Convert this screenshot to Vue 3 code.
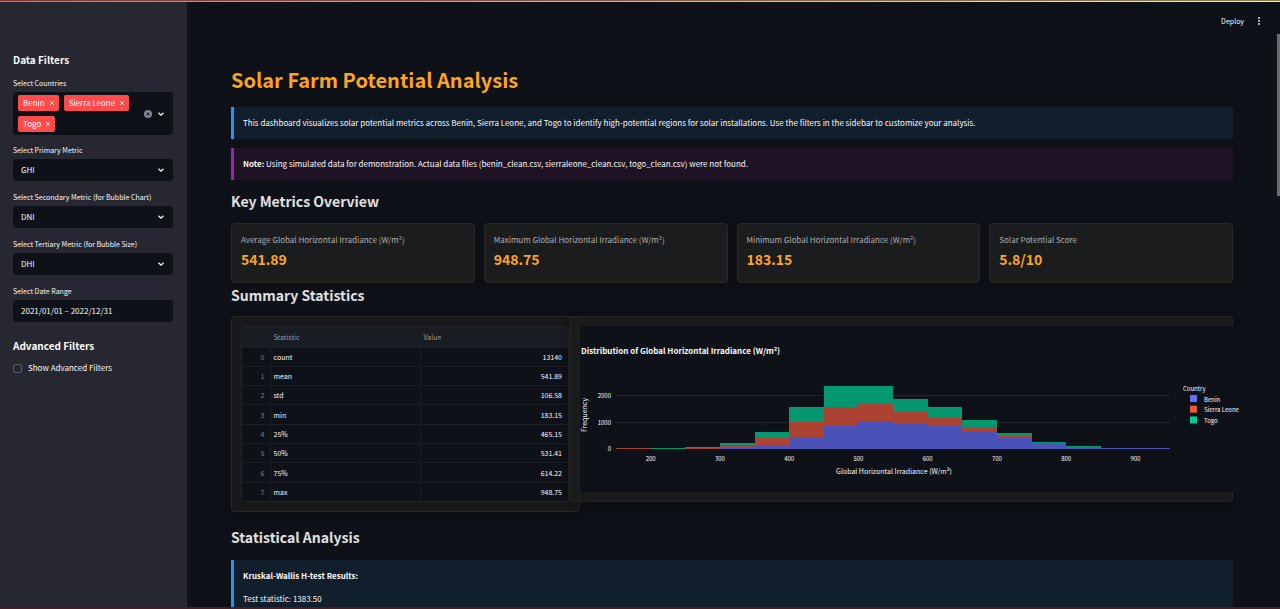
<script setup>
import { ref } from 'vue'

const countries = ref(['Benin', 'Sierra Leone', 'Togo'])
const selects = [
  { id: 'primary', label: 'Select Primary Metric', value: 'GHI' },
  { id: 'secondary', label: 'Select Secondary Metric (for Bubble Chart)', value: 'DNI' },
  { id: 'tertiary', label: 'Select Tertiary Metric (for Bubble Size)', value: 'DHI' },
]
const options = ['GHI', 'DNI', 'DHI']
const dateRange = ref('2021/01/01 – 2022/12/31')
const advanced = ref(false)

const metrics = [
  { label: 'Average Global Horizontal Irradiance (W/m²)', value: '541.89' },
  { label: 'Maximum Global Horizontal Irradiance (W/m²)', value: '948.75' },
  { label: 'Minimum Global Horizontal Irradiance (W/m²)', value: '183.15' },
  { label: 'Solar Potential Score', value: '5.8/10' },
]
const stats = [
  ['count', '13140'],
  ['mean', '541.89'],
  ['std', '106.58'],
  ['min', '183.15'],
  ['25%', '465.15'],
  ['50%', '531.41'],
  ['75%', '614.22'],
  ['max', '948.75'],
]

// Stacked counts per 50 W/m² bin: Benin, Sierra Leone, Togo
const bins = [
  [150, 0, 35, 0],
  [200, 0, 0, 38],
  [250, 10, 40, 40],
  [300, 30, 130, 50],
  [350, 100, 320, 210],
  [400, 400, 625, 580],
  [450, 900, 710, 800],
  [500, 1065, 630, 715],
  [550, 935, 485, 495],
  [600, 860, 305, 435],
  [650, 660, 180, 250],
  [700, 430, 65, 125],
  [750, 215, 25, 40],
  [800, 50, 25, 30],
  [850, 35, 0, 0],
  [900, 35, 0, 0],
]
const x = (v) => 36 + ((v - 150) * 554) / 800
const y = (v) => 123 - Math.round(v * 0.0263)
const bars = bins.flatMap(([start, ...counts]) => {
  let base = 0
  return counts.map((count, i) => {
    const top = y(base + count)
    const bar = { x: x(start), y: top, w: x(start + 50) - x(start), h: y(base) - top, cls: 'series-' + i }
    base += count
    return bar
  })
})
const xTicks = [200, 300, 400, 500, 600, 700, 800, 900]
const yTicks = [0, 1000, 2000]
const legend = ['Benin', 'Sierra Leone', 'Togo']
</script>

<template>
  <div class="app">
    <div class="decoration"></div>
    <aside class="sidebar">
      <h2>Data Filters</h2>
      <div class="field">
        <label for="countries">Select Countries</label>
        <div class="multi">
          <div class="tags">
            <span v-for="c in countries" :key="c" class="tag">
              {{ c }}
              <button type="button" :aria-label="'Remove ' + c">
                <svg viewBox="0 0 6 6"><path d="M1 1l4 4M5 1l-4 4" /></svg>
              </button>
            </span>
            <input id="countries" type="text" />
          </div>
          <button type="button" class="clear" aria-label="Clear all">
            <svg viewBox="0 0 8 8"><circle cx="4" cy="4" r="4" /><path d="M2.7 2.7l2.6 2.6M5.3 2.7l-2.6 2.6" /></svg>
          </button>
          <svg class="chevron" viewBox="0 0 8 8"><path d="M1.5 2.8L4 5.2l2.5-2.4" /></svg>
        </div>
      </div>
      <div v-for="s in selects" :key="s.id" class="field">
        <label :for="s.id">{{ s.label }}</label>
        <div class="select">
          <select :id="s.id" v-model="s.value">
            <option v-for="o in options" :key="o">{{ o }}</option>
          </select>
          <svg class="chevron" viewBox="0 0 8 8"><path d="M1.5 2.8L4 5.2l2.5-2.4" /></svg>
        </div>
      </div>
      <div class="field">
        <label for="dates">Select Date Range</label>
        <input id="dates" v-model="dateRange" class="date" type="text" />
      </div>
      <h2 class="advanced-title">Advanced Filters</h2>
      <label class="check">
        <input v-model="advanced" type="checkbox" />
        Show Advanced Filters
      </label>
    </aside>

    <div class="page">
      <header>
        <button type="button" class="deploy">Deploy</button>
        <button type="button" class="menu" aria-label="Menu">
          <svg viewBox="0 0 4 10"><circle cx="2" cy="2" r="0.9" /><circle cx="2" cy="5" r="0.9" /><circle cx="2" cy="8" r="0.9" /></svg>
        </button>
      </header>
      <main>
        <h1>Solar Farm Potential Analysis</h1>
        <p class="box info">This dashboard visualizes solar potential metrics across Benin, Sierra Leone, and Togo to identify high-potential regions for solar installations. Use the filters in the sidebar to customize your analysis.</p>
        <p class="box note"><strong>Note:</strong> Using simulated data for demonstration. Actual data files (benin_clean.csv, sierraleone_clean.csv, togo_clean.csv) were not found.</p>

        <h2>Key Metrics Overview</h2>
        <div class="metrics">
          <div v-for="m in metrics" :key="m.label" class="card metric">
            <div class="metric-label">{{ m.label }}</div>
            <div class="metric-value">{{ m.value }}</div>
          </div>
        </div>

        <h2 class="summary-title">Summary Statistics</h2>
        <div class="summary">
          <div class="card table-card">
            <div class="table-frame">
              <table>
                <thead>
                  <tr><th class="idx"></th><th class="stat">Statistic</th><th>Value</th></tr>
                </thead>
                <tbody>
                  <tr v-for="(row, i) in stats" :key="row[0]">
                    <td class="idx">{{ i }}</td>
                    <td>{{ row[0] }}</td>
                    <td class="num">{{ row[1] }}</td>
                  </tr>
                </tbody>
              </table>
            </div>
          </div>
          <div class="card chart-card">
            <svg class="chart" viewBox="0 0 662 166" role="img" aria-label="Distribution of Global Horizontal Irradiance">
              <text class="chart-title" x="1" y="28">Distribution of Global Horizontal Irradiance (W/m²)</text>
              <g v-for="t in yTicks" :key="t">
                <line class="grid" x1="36" x2="590" :y1="y(t) - 0.5" :y2="y(t) - 0.5" />
                <text class="tick" x="31" :y="y(t) + 2" text-anchor="end">{{ t }}</text>
              </g>
              <g shape-rendering="crispEdges">
                <rect v-for="(b, i) in bars" :key="i" :class="b.cls" :x="b.x" :y="b.y" :width="b.w" :height="b.h" />
              </g>
              <text v-for="t in xTicks" :key="t" class="tick" :x="x(t)" y="135" text-anchor="middle">{{ t }}</text>
              <text class="axis" x="314" y="148" text-anchor="middle">Global Horizontal Irradiance (W/m²)</text>
              <text class="axis" transform="translate(7 89) rotate(-90)" text-anchor="middle">Frequency</text>
              <text class="legend" x="603" y="65">Country</text>
              <g v-for="(name, i) in legend" :key="name">
                <rect :class="'key-' + i" x="610" :y="69 + i * 10.7" width="7" height="7" />
                <text class="legend" x="624" :y="75.5 + i * 10.7">{{ name }}</text>
              </g>
            </svg>
          </div>
        </div>

        <h2 class="analysis-title">Statistical Analysis</h2>
        <div class="box info results">
          <p><strong>Kruskal-Wallis H-test Results:</strong></p>
          <p>Test statistic: 1383.50</p>
        </div>
      </main>
      <div class="scroll-thumb"></div>
    </div>
    <div class="bottom-edge"></div>
  </div>
</template>

<style>
body {
  background: #0e1117;
}
</style>

<style scoped>
* {
  box-sizing: border-box;
}
.app {
  position: relative;
  display: grid;
  grid-template-columns: 187px minmax(0, 1fr);
  height: 100vh;
  overflow: hidden;
  background: #0e1117;
  color: #fafafa;
  font-family: "Noto Sans CJK SC", "Noto Sans", sans-serif;
  font-size: 8px;
  line-height: 12px;
}
button, input, select {
  margin: 0;
  padding: 0;
  border: 0;
  background: none;
  color: inherit;
  font: inherit;
  outline: 0;
}
h1, h2, p {
  margin: 0;
}
svg {
  display: block;
}
.decoration {
  position: absolute;
  z-index: 2;
  inset: 0 0 auto;
  height: 2px;
  background: linear-gradient(rgba(14, 17, 23, 0.5) 1px, transparent 1px), linear-gradient(90deg, #ff5c55, #fff284);
}
.bottom-edge {
  position: absolute;
  z-index: 2;
  inset: auto 0 0;
  height: 2px;
  background: #4a1c20;
}

/* Sidebar */
.sidebar {
  padding: 52px 14px 0 13px;
  background: #262730;
}
.sidebar h2 {
  margin-bottom: 9px;
  font-size: 10px;
  font-weight: 700;
  line-height: 16px;
}
.field {
  margin-bottom: 10px;
}
.field label {
  display: block;
  margin-bottom: 3px;
  font-size: 7px;
}
.field:first-of-type {
  margin-bottom: 9px;
}
.multi {
  display: flex;
  align-items: center;
  gap: 5px;
  padding: 3px 8px 3px 5px;
  border-radius: 4px;
  background: #0e1117;
}
.tags {
  display: flex;
  flex: 1;
  flex-wrap: wrap;
  gap: 5px;
}
.tags input {
  flex: 1;
  width: 8px;
  min-width: 8px;
}
.tag {
  display: flex;
  align-items: center;
  gap: 4px;
  height: 16px;
  padding: 0 4px 0 5px;
  border-radius: 2px;
  background: #ff4b4b;
}
.tag svg {
  width: 6px;
  height: 6px;
}
.tag path {
  stroke: #fff;
  stroke-width: 0.8;
}
.clear svg {
  width: 8px;
  height: 8px;
}
.clear circle {
  fill: #808495;
}
.clear path {
  stroke: #0e1117;
  stroke-width: 1;
}
.chevron {
  width: 8px;
  height: 8px;
  fill: none;
  stroke: #fafafa;
  stroke-width: 1.3;
}
.select {
  position: relative;
}
.select select, .date {
  display: block;
  width: 100%;
  height: 22px;
  padding: 0 8px;
  border-radius: 4px;
  background: #0e1117;
  appearance: none;
}
.date {
  padding-bottom: 2px;
}
.select .chevron {
  position: absolute;
  top: 7px;
  right: 8px;
  pointer-events: none;
}
.sidebar .advanced-title {
  margin: 16px 0 8px;
}
.check {
  display: flex;
  align-items: center;
  gap: 6px;
}
.check input {
  width: 9px;
  height: 9px;
  border: 1px solid #5c5d66;
  border-radius: 2px;
  appearance: none;
}
.check input:checked {
  background: #ff4b4b;
}

/* Page */
.page {
  position: relative;
  min-width: 0;
}
header {
  display: flex;
  align-items: center;
  justify-content: flex-end;
  gap: 13px;
  height: 42px;
  padding-right: 19px;
}
.deploy {
  font-size: 7px;
}
.menu svg {
  width: 4px;
  height: 10px;
  fill: #fafafa;
}
main {
  padding: 22px 47px 0 44px;
}
h1 {
  margin-bottom: 11px;
  color: #ffa421;
  font-size: 20px;
  font-weight: 700;
  line-height: 32px;
}
main h2 {
  margin: 11px 0 12px;
  color: #e0e0e0;
  font-size: 14px;
  font-weight: 700;
  line-height: 20px;
}
.box {
  padding: 10px 9px;
  border-left: 3px solid;
}
.info {
  border-color: #2196f3;
  background: #111e2c;
}
.note {
  margin-top: 9px;
  border-color: #9c27b0;
  background: #1f1225;
}
.card {
  border: 1px solid #27292b;
  border-radius: 4px;
  background: #1a1c1d;
  box-shadow: 0 2px 9px rgba(0, 0, 0, 0.25);
}
.metrics {
  display: grid;
  grid-template-columns: repeat(4, minmax(0, 1fr));
  gap: 9px;
}
.metric {
  padding: 10px 9px 15px;
}
.metric-label {
  color: #b0b0b0;
}
.metric-value {
  margin-top: 5px;
  color: #ffa421;
  font-size: 14px;
  font-weight: 700;
  line-height: 16px;
}
main .summary-title {
  margin: 2px 0 11px;
}
.summary {
  display: grid;
  grid-template-columns: minmax(0, 339fr) minmax(0, 663fr);
  align-items: start;
}
.table-card {
  margin-right: -10px;
  padding: 9px 10px 9px 9px;
  background: #17181a;
}
.table-frame {
  overflow: hidden;
  border: 1px solid #23252b;
  border-radius: 4px;
}
table {
  width: 100%;
  height: 174px;
  border-collapse: collapse;
  background: #0e1117;
  font-size: 7px;
  table-layout: fixed;
}
th, td {
  padding: 0 5px 0 3px;
  border-right: 1px solid #1b1e25;
  border-bottom: 1px solid #1b1e25;
  text-align: left;
}
th:last-child, td:last-child {
  border-right: 0;
}
tbody tr:last-child td {
  border-bottom: 0;
}
th {
  height: 20px;
  background: #1a1c24;
  color: #9a9ba0;
  font-weight: 400;
}
.idx {
  width: 28px;
  color: #80828a;
}
td.idx {
  text-align: right;
}
.stat {
  width: 150px;
}
td.num {
  padding-right: 6px;
  text-align: right;
}
.chart-card {
  padding: 9px 0 9px 9px;
  border-color: rgba(255, 255, 255, 0.05);
  background: rgba(28, 29, 29, 0.75);
}
.chart {
  width: calc(100% + 10px);
  background: #0e1117;
}
.chart text {
  fill: #fafafa;
}
.chart .chart-title {
  font-size: 8px;
  font-weight: 700;
}
.chart .tick, .chart .legend {
  font-size: 6px;
}
.chart .axis {
  font-size: 7px;
}
.grid {
  stroke: #22252d;
  stroke-width: 1;
}
.series-0 { fill: #4a52b8; }
.series-1 { fill: #ac4232; }
.series-2 { fill: #059870; }
.key-0 { fill: #636efa; }
.key-1 { fill: #ef553b; }
.key-2 { fill: #00cc96; }
main .analysis-title {
  margin: 15px 0 13px;
}
.results p + p {
  margin-top: 11px;
}
.scroll-thumb {
  position: absolute;
  top: 34px;
  right: 0;
  width: 3px;
  height: 162px;
  background: #6b6c70;
}
</style>
